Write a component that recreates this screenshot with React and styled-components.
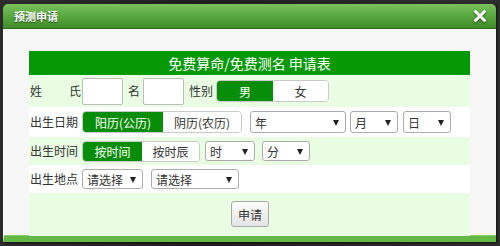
import styled, { createGlobalStyle } from "styled-components";

// ------------------ Styled Components ------------------

const GlobalStyle = createGlobalStyle`
  html, body {
    margin: 0;
    padding: 0;
    background: #262626;
  }
  body {
    font-family: "Noto Sans CJK SC", "Noto Sans", sans-serif;
  }
`;

const Stage = styled.div`
  padding: 4px 4px 4px 3px;
  background: linear-gradient(90deg, #2c2c2c, #1f1f1f 40%, #2e2e2e);
`;

const Dialog = styled.section`
  width: 493px;
  box-shadow: 1px 1px 2px rgba(0, 0, 0, 0.6);
`;

const TitleBar = styled.header`
  height: 25px;
  box-sizing: border-box;
  border-radius: 5px 5px 0 0;
  background: linear-gradient(#79c15e, #56a53c 55%, #3f8d28);
  border-bottom: 1px solid #2f6d1d;
  display: flex;
  align-items: center;
  justify-content: space-between;
  padding: 0 8px 0 11px;

  h2 {
    margin: 0;
    font-size: 11px;
    font-weight: 700;
    color: #fff;
    text-shadow: 0 1px 1px rgba(0, 0, 0, 0.55);
  }
`;

const CloseButton = styled.button`
  border: 0;
  padding: 0;
  background: none;
  width: 16px;
  height: 16px;
  display: flex;
  cursor: pointer;
  filter: drop-shadow(0 1px 1px rgba(0, 0, 0, 0.5));
`;

const Body = styled.div`
  background: #f7f7f7;
  border-left: 1px solid #fff;
  padding: 22px 26px 0 25px;
  border-bottom: 6px solid #63b846;
  box-shadow: inset 0 -7px 0 -6px #86d164;
`;

const Form = styled.form`
  display: flex;
  flex-direction: column;
  font-size: 12px;
  color: #333;
`;

const FormHeader = styled.h3`
  margin: 0;
  height: 24px;
  background: #069906;
  color: #fff;
  font-size: 14px;
  font-weight: 400;
  display: flex;
  align-items: center;
  justify-content: center;
`;

const Row = styled.div`
  height: ${(p) => p.$h}px;
  background: ${(p) => (p.$tint ? "#e8fde1" : "#fff")};
  display: flex;
  align-items: center;
  justify-content: ${(p) => (p.$center ? "center" : "flex-start")};
  padding-left: 1px;
`;

const Label = styled.label`
  margin-left: ${(p) => p.$ml || 0}px;
  white-space: nowrap;
  line-height: 1;
`;

const SpacedLabel = styled.label`
  width: 51px;
  display: flex;
  justify-content: space-between;
  line-height: 1;
`;

const TextInput = styled.input`
  box-sizing: border-box;
  width: 41px;
  height: 27px;
  margin-left: ${(p) => p.$ml || 0}px;
  border: 1px solid #bdbdbd;
  border-radius: 2px;
  background: #fff;
  padding: 0 4px;
  outline: none;
`;

const Toggle = styled.div`
  display: flex;
  height: ${(p) => p.$h}px;
  margin-left: ${(p) => p.$ml || 0}px;
  box-sizing: border-box;
  border: 1px solid #c9c9c9;
  border-radius: 4px;
  overflow: hidden;
  background: #fff;
`;

const Segment = styled.button`
  border: 0;
  margin: 0;
  padding: 0;
  width: ${(p) => p.$w}px;
  box-sizing: border-box;
  white-space: nowrap;
  font-family: inherit;
  font-size: 12px;
  background: ${(p) => (p.$active ? "#088d08" : "#fff")};
  color: ${(p) => (p.$active ? "#fff" : "#333")};
  cursor: pointer;
`;

const SelectBox = styled.div`
  position: relative;
  width: ${(p) => p.$w}px;
  height: ${(p) => p.$h}px;
  margin-left: ${(p) => p.$ml || 0}px;

  select {
    appearance: none;
    width: 100%;
    height: 100%;
    box-sizing: border-box;
    border: 1px solid #ababab;
    border-radius: 3px;
    background: #fff;
    font-family: inherit;
    font-size: 12px;
    color: #333;
    padding: 0 0 0 4px;
    outline: none;
  }
`;

const Arrow = styled.span`
  position: absolute;
  right: 7px;
  top: 50%;
  margin-top: -2px;
  width: 0;
  height: 0;
  border-left: 3px solid transparent;
  border-right: 3px solid transparent;
  border-top: 6px solid #222;
  pointer-events: none;
`;

const SubmitButton = styled.button`
  width: 38px;
  height: 26px;
  margin-top: -1px;
  border: 1px solid #a9a9a9;
  border-radius: 3px;
  background: linear-gradient(#fcfcfc, #e4e4e4);
  font-family: inherit;
  font-size: 12px;
  color: #333;
  padding: 0;
  cursor: pointer;
`;

// ------------------ Componente ------------------

function Select({ w, h, ml, label, options = [] }) {
  return (
    <SelectBox $w={w} $h={h} $ml={ml}>
      <select defaultValue="">
        <option value="">{label}</option>
        {options.map((o) => (
          <option key={o} value={o}>
            {o}
          </option>
        ))}
      </select>
      <Arrow />
    </SelectBox>
  );
}

const years = Array.from({ length: 80 }, (_, i) => `${2024 - i}年`);
const months = Array.from({ length: 12 }, (_, i) => `${i + 1}月`);
const days = Array.from({ length: 31 }, (_, i) => `${i + 1}日`);
const hours = Array.from({ length: 24 }, (_, i) => `${i}时`);
const minutes = Array.from({ length: 60 }, (_, i) => `${i}分`);

export default function App() {
  return (
    <>
      <GlobalStyle />
      <Stage>
        <Dialog>
          <TitleBar>
            <h2>预测申请</h2>
            <CloseButton aria-label="关闭">
              <svg width="16" height="16" viewBox="0 0 16 16">
                <path
                  d="M3.5 3.5 L12.5 12.5 M12.5 3.5 L3.5 12.5"
                  stroke="#fff"
                  strokeWidth="3"
                  strokeLinecap="round"
                />
              </svg>
            </CloseButton>
          </TitleBar>

          <Body>
            <Form onSubmit={(e) => e.preventDefault()}>
              <FormHeader>免费算命/免费测名 申请表</FormHeader>

              <Row $h={32} $tint>
                <SpacedLabel>
                  <span>姓</span>
                  <span>氏</span>
                </SpacedLabel>
                <TextInput $ml={1} />
                <Label $ml={5}>名</Label>
                <TextInput $ml={3} />
                <Label $ml={5}>性别</Label>
                <Toggle $h={22} $ml={3}>
                  <Segment $active $w={56}>男</Segment>
                  <Segment $w={55}>女</Segment>
                </Toggle>
              </Row>

              <Row $h={30}>
                <Label>出生日期</Label>
                <Toggle $h={22} $ml={4}>
                  <Segment $active $w={80}>阳历(公历)</Segment>
                  <Segment $w={78}>阴历(农历)</Segment>
                </Toggle>
                <Select w={96} h={22} ml={8} label="年" options={years} />
                <Select w={48} h={22} ml={4} label="月" options={months} />
                <Select w={48} h={22} ml={5} label="日" options={days} />
              </Row>

              <Row $h={28} $tint>
                <Label>出生时间</Label>
                <Toggle $h={21} $ml={4}>
                  <Segment $active $w={59}>按时间</Segment>
                  <Segment $w={57}>按时辰</Segment>
                </Toggle>
                <Select w={50} h={20} ml={5} label="时" options={hours} />
                <Select w={48} h={20} ml={7} label="分" options={minutes} />
              </Row>

              <Row $h={28}>
                <Label>出生地点</Label>
                <Select w={61} h={20} ml={4} label="请选择" />
                <Select w={88} h={20} ml={8} label="请选择" />
              </Row>

              <Row $h={43} $tint $center>
                <SubmitButton type="submit">申请</SubmitButton>
              </Row>
            </Form>
          </Body>
        </Dialog>
      </Stage>
    </>
  );
}
